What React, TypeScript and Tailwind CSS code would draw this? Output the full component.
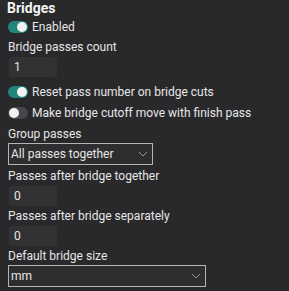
import React from 'react'

const Toggle: React.FC<{ on: boolean }> = ({ on }) => (
  <div
    className={`relative w-[20px] h-[12px] rounded-full shrink-0 ${
      on ? 'bg-[#21877e]' : 'bg-[#44484a]'
    }`}>
    <div
      className={`absolute top-[1px] w-[10px] h-[10px] rounded-full bg-[#f2f2f2] ${
        on ? 'right-[1px]' : 'left-[1px]'
      }`}
    />
  </div>
)

const ToggleRow: React.FC<{ on: boolean; label: string; className?: string }> = ({
  on,
  label,
  className,
}) => (
  <div className={`flex items-center gap-[4px] h-[16px] ${className ?? ''}`}>
    <Toggle on={on} />
    <span className="leading-[16px] whitespace-nowrap">{label}</span>
  </div>
)

const Label: React.FC<{ text: string; className?: string }> = ({ text, className }) => (
  <div className={`h-[16px] leading-[16px] whitespace-nowrap ${className ?? ''}`}>{text}</div>
)

const NumberBox: React.FC<{ value: string; className?: string }> = ({ value, className }) => (
  <div
    className={`ml-[1px] w-[48px] h-[20px] rounded-[3px] bg-[#323234] flex items-center pl-[5px] leading-[16px] ${
      className ?? ''
    }`}>
    {value}
  </div>
)

const Select: React.FC<{ value: string; width: string; className?: string }> = ({
  value,
  width,
  className,
}) => (
  <div
    className={`${width} h-[22px] border border-[#b4b4b4] bg-[#2e2e30] flex items-center justify-between pl-[2px] pr-[4px] ${
      className ?? ''
    }`}>
    <span className="leading-[16px] whitespace-nowrap">{value}</span>
    <svg width="10" height="6" viewBox="0 0 10 6" className="shrink-0">
      <path d="M1 1 L5 5 L9 1" fill="none" stroke="#b0b0b0" strokeWidth="0.8" />
    </svg>
  </div>
)

export default function App() {
  return (
    <div
      className="w-[289px] h-[291px] overflow-hidden bg-[#29292b] text-[#e6e6e6] text-[12px] pl-[8px] flex flex-col"
      style={{ fontFamily: 'Roboto, "Liberation Sans", sans-serif' }}>
      <div className="h-[16px] leading-[16px] text-[14px] font-bold -ml-[1px] text-[#f2f2f2]">
        Bridges
      </div>
      <ToggleRow on label="Enabled" className="mt-[3px]" />
      <Label text="Bridge passes count" className="mt-[4px]" />
      <NumberBox value="1" className="mt-[2px]" />
      <ToggleRow on label="Reset pass number on bridge cuts" className="mt-[7px]" />
      <ToggleRow on={false} label="Make bridge cutoff move with finish pass" className="mt-[5px]" />
      <Label text="Group passes" className="mt-[5px]" />
      <Select value="All passes together" width="w-[145px]" className="mt-[1px]" />
      <Label text="Passes after bridge together" className="mt-[3px]" />
      <NumberBox value="0" className="mt-[2px]" />
      <Label text="Passes after bridge separately" className="mt-[2px]" />
      <NumberBox value="0" className="mt-[2px]" />
      <Label text="Default bridge size" className="mt-[2px]" />
      <Select value="mm" width="w-[198px]" className="mt-[1px]" />
    </div>
  )
}
